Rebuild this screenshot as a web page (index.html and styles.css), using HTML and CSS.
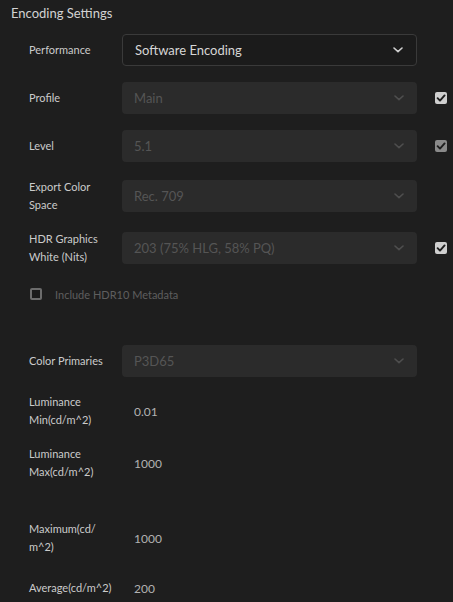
FILE: index.html
```html
<!DOCTYPE html>
<html>
<head>
<meta charset="utf-8">
<link rel="stylesheet" href="styles.css">
</head>
<body>
<div class="panel">
  <div class="title">Encoding Settings</div>
  <div class="rows">
    <div class="row">
      <div class="label">Performance</div>
      <div class="select active"><span>Software Encoding</span><svg class="chev" viewBox="0 0 10 6"><path d="M1 1 L5 4.6 L9 1" /></svg></div>
      <div class="cbcol"></div>
    </div>
    <div class="row">
      <div class="label">Profile</div>
      <div class="select disabled"><span>Main</span><svg class="chev" viewBox="0 0 10 6"><path d="M1 1 L5 4.6 L9 1" /></svg></div>
      <div class="cbcol"><span class="cb on"><svg viewBox="0 0 12 12"><path d="M2.6 6.2 L5 8.6 L9.6 3.4" /></svg></span></div>
    </div>
    <div class="row">
      <div class="label">Level</div>
      <div class="select disabled"><span>5.1</span><svg class="chev" viewBox="0 0 10 6"><path d="M1 1 L5 4.6 L9 1" /></svg></div>
      <div class="cbcol"><span class="cb dim"><svg viewBox="0 0 12 12"><path d="M2.6 6.2 L5 8.6 L9.6 3.4" /></svg></span></div>
    </div>
    <div class="row">
      <div class="label">Export Color<br>Space</div>
      <div class="select disabled"><span>Rec. 709</span><svg class="chev" viewBox="0 0 10 6"><path d="M1 1 L5 4.6 L9 1" /></svg></div>
      <div class="cbcol"></div>
    </div>
    <div class="row">
      <div class="label">HDR Graphics<br>White (Nits)</div>
      <div class="select disabled"><span>203 (75% HLG, 58% PQ)</span><svg class="chev" viewBox="0 0 10 6"><path d="M1 1 L5 4.6 L9 1" /></svg></div>
      <div class="cbcol"><span class="cb on"><svg viewBox="0 0 12 12"><path d="M2.6 6.2 L5 8.6 L9.6 3.4" /></svg></span></div>
    </div>
    <div class="row check-row">
      <span class="cb off"></span>
      <span class="check-text">Include HDR10 Metadata</span>
    </div>
    <div class="row spaced">
      <div class="label">Color Primaries</div>
      <div class="select disabled"><span>P3D65</span><svg class="chev" viewBox="0 0 10 6"><path d="M1 1 L5 4.6 L9 1" /></svg></div>
      <div class="cbcol"></div>
    </div>
    <div class="row">
      <div class="label">Luminance<br>Min(cd/m^2)</div>
      <div class="value">0.01</div>
    </div>
    <div class="row">
      <div class="label">Luminance<br>Max(cd/m^2)</div>
      <div class="value">1000</div>
    </div>
    <div class="row spaced">
      <div class="label">Maximum(cd/<br>m^2)</div>
      <div class="value">1000</div>
    </div>
    <div class="row">
      <div class="label">Average(cd/m^2)</div>
      <div class="value">200</div>
    </div>
  </div>
</div>
</body>
</html>
```
FILE: styles.css
```css
html, body {
  margin: 0;
  padding: 0;
  background: #1e1e1e;
  height: 100%;
  overflow: hidden;
}
.panel {
  font-family: Lato, "Open Sans", sans-serif;
  padding: 4px 0 0 0;
}
.title {
  padding-left: 11px;
  font-size: 13px;
  line-height: 18px;
  color: #d2d2d2;
}
.rows {
  margin-top: 12px;
  padding-left: 29px;
  display: flex;
  flex-direction: column;
  gap: 16px;
}
.row {
  display: flex;
  align-items: center;
  min-height: 32px;
}
.row.spaced {
  margin-top: 23px;
}
.label {
  width: 93px;
  flex: none;
  font-size: 11px;
  line-height: 18px;
  color: #cbcbcb;
}
.select {
  width: 295px;
  height: 32px;
  box-sizing: border-box;
  flex: none;
  border-radius: 4px;
  display: flex;
  align-items: center;
  justify-content: space-between;
  padding: 0 13px 0 12px;
  font-size: 13px;
}
.select.active {
  background: #1b1b1b;
  border: 1px solid #3a3a3a;
  color: #d6d6d6;
}
.select.disabled {
  background: #2b2b2b;
  color: #555555;
}
.chev {
  width: 10px;
  height: 6px;
  fill: none;
  stroke-width: 1.6;
  stroke-linecap: round;
  stroke-linejoin: round;
}
.active .chev { stroke: #d0d0d0; }
.disabled .chev { stroke: #4e4e4e; }
.cbcol {
  width: 18px;
  flex: none;
  padding-left: 18px;
  display: flex;
  align-items: center;
}
.cb {
  width: 12px;
  height: 12px;
  box-sizing: border-box;
  border-radius: 2px;
  display: inline-flex;
  flex: none;
}
.cb svg {
  width: 12px;
  height: 12px;
  fill: none;
  stroke: #1e1e1e;
  stroke-width: 1.9;
  stroke-linecap: round;
  stroke-linejoin: round;
}
.cb.on { background: #cfcfcf; }
.cb.dim { background: #8a8a8a; }
.cb.off {
  border: 2px solid #6c6c6c;
  background: #1a1a1a;
  margin-left: 1px;
}
.check-row {
  min-height: 24px;
}
.check-text {
  margin-left: 13px;
  font-size: 11px;
  color: #5e5e5e;
}
.value {
  padding-left: 12px;
  font-size: 12px;
  color: #b2b2b2;
}
```
